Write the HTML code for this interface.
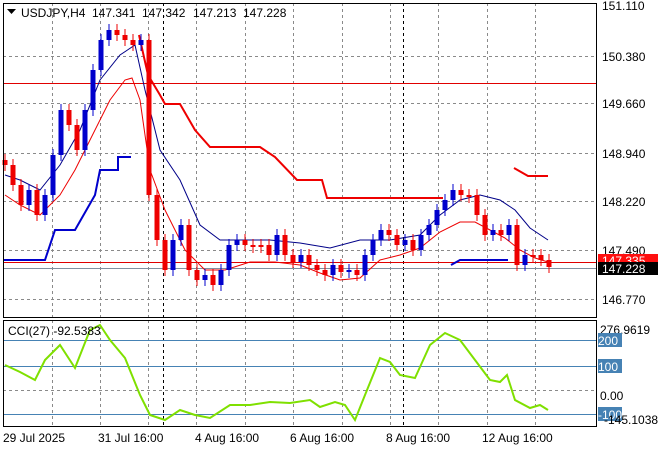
<!DOCTYPE html>
<html><head><meta charset="utf-8"><style>
body{margin:0;background:#fff;width:660px;height:450px;overflow:hidden;font-family:"Liberation Sans",sans-serif}
svg text{font-family:"Liberation Sans",sans-serif;font-size:12px;fill:#000}
</style></head><body>
<svg id="s" width="660" height="450" xmlns="http://www.w3.org/2000/svg">
<rect width="660" height="450" fill="#fff"/>
<g id="grid" stroke="#8a8a8a" stroke-dasharray="3,3" stroke-width="1">
<line x1="3" y1="56.5" x2="596" y2="56.5"/><line x1="3" y1="103.5" x2="596" y2="103.5"/><line x1="3" y1="153.5" x2="596" y2="153.5"/><line x1="3" y1="201.5" x2="596" y2="201.5"/><line x1="3" y1="250.5" x2="596" y2="250.5"/><line x1="3" y1="299.5" x2="596" y2="299.5"/>
<line x1="3" y1="390.5" x2="596" y2="390.5"/>
</g>
<g id="vg" stroke="#8a8a8a" stroke-dasharray="3,3"></g>
<g stroke="#000" stroke-dasharray="3,3"><line x1="163.5" y1="3" x2="163.5" y2="317"/><line x1="163.5" y1="320" x2="163.5" y2="426"/><line x1="403.5" y1="3" x2="403.5" y2="317"/><line x1="403.5" y1="320" x2="403.5" y2="426"/></g>
<line x1="3" y1="83.5" x2="596" y2="83.5" stroke="#e00000"/>
<line x1="3" y1="262.5" x2="596" y2="262.5" stroke="#e00000"/>
<line x1="3" y1="268.5" x2="596" y2="268.5" stroke="#8090a0"/>
<g stroke="#4682b4"><line x1="3" y1="340.5" x2="596" y2="340.5"/><line x1="3" y1="366.5" x2="596" y2="366.5"/><line x1="3" y1="414.5" x2="596" y2="414.5"/></g>
<polyline fill="none" stroke="#0000cc" stroke-width="2" points="3,260 45,260 55,230 75,230 95,195 100,170 118,170 118,157 131,157"/>
<polyline fill="none" stroke="#0000cc" stroke-width="2" points="451,265 460,260 508,260"/>
<polyline fill="none" stroke="#ee0000" stroke-width="2" points="139,35 148,75 160,95 165,104 180,104 195,130 210,147 260,147 275,157 297,180 322,180 327,198 443,198"/>
<polyline fill="none" stroke="#ee0000" stroke-width="2" points="514,168 528,176 548,176"/>
<polyline fill="none" stroke="#000088" points="5,175 20,180 40,190 60,165 80,130 100,80 120,55 135,45 145,90 160,150 180,180 200,225 220,240 245,240 270,240 300,243 330,248 360,240 390,240 420,235 440,215 460,200 480,195 500,200 515,210 530,228 548,240"/>
<polyline fill="none" stroke="#ee0000" points="5,195 20,205 40,215 60,195 75,170 90,140 110,100 125,80 132,78 140,100 150,170 165,210 185,250 205,270 225,270 250,262 275,262 300,265 320,273 340,280 360,278 380,260 400,255 420,248 440,232 460,222 475,222 490,230 505,238 520,250 535,258 548,262"/>
<g id="c"></g>
<polyline fill="none" stroke="#7fe000" stroke-width="2" points="5,365 20,372 35,380 45,360 60,345 75,368 90,330 100,325 110,340 125,358 140,395 150,415 165,420 180,410 195,415 210,418 230,405 250,405 270,402 290,403 310,400 320,407 335,402 345,405 355,420 365,395 380,358 390,362 400,375 415,378 430,345 445,333 460,340 475,360 490,380 500,382 507,375 515,400 530,408 540,405 548,410"/>
<rect x="3.5" y="3.5" width="593" height="314" fill="none" stroke="#000"/>
<rect x="3.5" y="320.5" width="593" height="106" fill="none" stroke="#000"/>
<path d="M7,9 h9 l-4.5,5z" fill="#000"/>
<text x="21" y="17">USDJPY,H4</text><text x="92" y="17">147.341</text><text x="142" y="17">147.342</text><text x="193" y="17">147.213</text><text x="243" y="17">147.228</text>
<text x="8" y="335">CCI(27) -92.5383</text>
<g font-size="12"><text x="602" y="10">151.110</text><text x="602" y="61">150.380</text><text x="602" y="108">149.660</text><text x="602" y="158">148.940</text><text x="602" y="206">148.220</text><text x="602" y="255">147.490</text><text x="602" y="304">146.770</text>
<text x="600" y="334">276.9619</text><text x="600" y="400">0.00</text></g>
<rect x="598" y="254" width="60" height="12" fill="#ff1010"/><text x="602" y="265" style="fill:#fff">147.335</text>
<rect x="598" y="262" width="60" height="13" fill="#000"/><text x="602" y="273" style="fill:#fff">147.228</text>
<rect x="598" y="333" width="24" height="14" fill="#4682b4"/><text x="598" y="345" style="fill:#fff">200</text>
<rect x="598" y="359" width="24" height="14" fill="#4682b4"/><text x="598" y="371" style="fill:#fff">100</text>
<rect x="598" y="407" width="24" height="14" fill="#4682b4"/><text x="598" y="419" style="fill:#fff">-100</text>
<text x="604" y="424">-145.1038</text>
<g><text x="3" y="442">29 Jul 2025</text><text x="98" y="442">31 Jul 16:00</text><text x="195" y="442">4 Aug 16:00</text><text x="290" y="442">6 Aug 16:00</text><text x="386" y="442">8 Aug 16:00</text><text x="482" y="442">12 Aug 16:00</text></g>
</svg>
<script>
var vg=document.getElementById('vg'),ns='http://www.w3.org/2000/svg';
[52,100,148,196,245,293,342,390,438,487,535].forEach(function(x){
[[3,317],[320,426]].forEach(function(r){var l=document.createElementNS(ns,'line');l.setAttribute('x1',x+.5);l.setAttribute('x2',x+.5);l.setAttribute('y1',r[0]);l.setAttribute('y2',r[1]);vg.appendChild(l);});});
var ys=[165,185,205,190,215,195,155,110,125,150,110,70,40,30,35,40,45,40,195,240,270,240,225,270,280,275,285,270,245,240,245,245,245,255,235,255,262,255,265,270,275,265,272,270,275,255,240,230,235,245,240,250,235,225,210,200,190,195,195,215,235,230,235,225,265,255,255,260,267];
var g=document.getElementById('c'),prev=160;
ys.forEach(function(c,i){var x=5+i*8,o=prev;prev=c;var up=c<o,col=up?'#0000cc':'#ee0000';
var top=Math.min(o,c),bot=Math.max(o,c);if(bot-top<2)bot=top+2;
var w=document.createElementNS(ns,'line');w.setAttribute('x1',x);w.setAttribute('x2',x);w.setAttribute('y1',top-6);w.setAttribute('y2',bot+6);w.setAttribute('stroke',col);g.appendChild(w);
var r=document.createElementNS(ns,'rect');r.setAttribute('x',x-2.5);r.setAttribute('y',top);r.setAttribute('width',5);r.setAttribute('height',bot-top);r.setAttribute('fill',col);g.appendChild(r);});
</script>
</body></html>
